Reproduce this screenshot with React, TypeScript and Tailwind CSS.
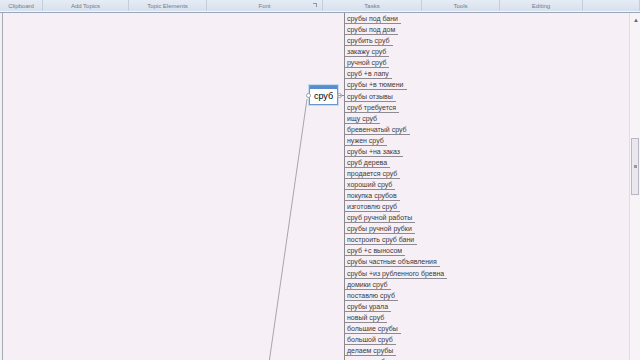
import React from "react";

const groups = [
  { label: "Clipboard", w: 43 },
  { label: "Add Topics", w: 86 },
  { label: "Topic Elements", w: 78 },
  { label: "Font", w: 116, launcher: true },
  { label: "Tasks", w: 99 },
  { label: "Tools", w: 78 },
  { label: "Editing", w: 83 },
  { label: "", w: 57 },
];

const topics = [
  "срубы под бани",
  "срубы под дом",
  "срубить сруб",
  "закажу сруб",
  "ручной сруб",
  "сруб +в лапу",
  "срубы +в тюмени",
  "срубы отзывы",
  "сруб требуется",
  "ищу сруб",
  "бревенчатый сруб",
  "нужен сруб",
  "срубы +на заказ",
  "сруб дерева",
  "продается сруб",
  "хороший сруб",
  "покупка срубов",
  "изготовлю сруб",
  "сруб ручной работы",
  "срубы ручной рубки",
  "построить сруб бани",
  "сруб +с выносом",
  "срубы частные объявления",
  "срубы +из рубленного бревна",
  "домики сруб",
  "поставлю сруб",
  "срубы урала",
  "новый сруб",
  "большие срубы",
  "большой сруб",
  "делаем срубы",
  "купить сруб",
];

function Ribbon() {
  return (
    <div className="flex h-[11px] bg-gradient-to-b from-[#e6ecf5] to-[#d7e0ec]">
      {groups.map((g, i) => (
        <div
          key={i}
          style={{ width: g.w }}
          className="relative flex items-center justify-center border-r border-[#c3cedc] text-[6px] leading-none text-[#6d7c8e]"
        >
          {g.label}
          {g.launcher && (
            <span className="absolute right-[5px] top-[3px] h-[4px] w-[4px] border-r border-t border-[#8a97a8]" />
          )}
        </div>
      ))}
    </div>
  );
}

function CentralTopic() {
  return (
    <div className="absolute left-[306px] top-[72px] flex h-[20px] w-[29px] flex-col border border-[#6b97cf] bg-white shadow-[0_0_0_1px_#c8daf0]">
      <div className="h-[3px] bg-[#5a8ccc]" />
      <div className="flex flex-1 items-center justify-center text-[9px] leading-none text-black">
        сруб
      </div>
      <span className="absolute left-[-4px] top-[7px] h-[5px] w-[5px] rounded-full border border-[#9aa3b0] bg-white" />
      <span className="absolute right-[-5px] top-[7px] flex h-[5px] w-[5px] items-center justify-center rounded-full border border-[#9aa3b0] bg-white">
        <span className="h-px w-[3px] bg-[#9aa3b0]" />
      </span>
    </div>
  );
}

export default function App() {
  return (
    <div
      className="flex h-[360px] w-[640px] flex-col overflow-hidden bg-[#eef1f6]"
      style={{ fontFamily: '"Liberation Sans", Arial, sans-serif' }}
    >
      <Ribbon />
      <div className="h-px bg-[#f4f6fa]" />
      <div className="h-px bg-[#98a6b9]" />
      <div className="flex flex-1 pl-[2px]">
        <div className="relative flex-1 overflow-hidden border-l border-[#a9a9b2] bg-[#f6f0f6]">
          <svg className="absolute left-0 top-0" width="640" height="360">
            <line x1="304" y1="86" x2="266" y2="350" stroke="#a8a4ac" strokeWidth="1" />
            <line x1="341.5" y1="0" x2="341.5" y2="360" stroke="#8c8890" strokeWidth="1" />
            <line x1="337" y1="82.5" x2="341" y2="82.5" stroke="#8c8890" strokeWidth="1" />
          </svg>
          <CentralTopic />
          <div className="absolute left-[341px] top-0 flex flex-col">
            {topics.map((t) => (
              <div key={t} className="flex h-[11.07px] items-end">
                <span className="border-b border-[#8e8a92] pl-[3px] pr-[3px] text-[7px] leading-[9px] text-[#3a3a3a]">
                  {t}
                </span>
              </div>
            ))}
          </div>
        </div>
        <div className="relative w-[11px] border-l border-[#e2dce4] bg-[#f7f3f7]">
          <span className="absolute left-[3px] top-[4px] text-[6px] leading-none text-[#666]">▲</span>
          <div className="absolute left-[1px] top-[125px] flex h-[57px] w-[8px] items-center justify-center border border-[#b9b7c2] bg-[#ebe7ee]">
            <span className="h-[3px] w-[3px] bg-[#9a97a3]" />
          </div>
        </div>
      </div>
    </div>
  );
}
